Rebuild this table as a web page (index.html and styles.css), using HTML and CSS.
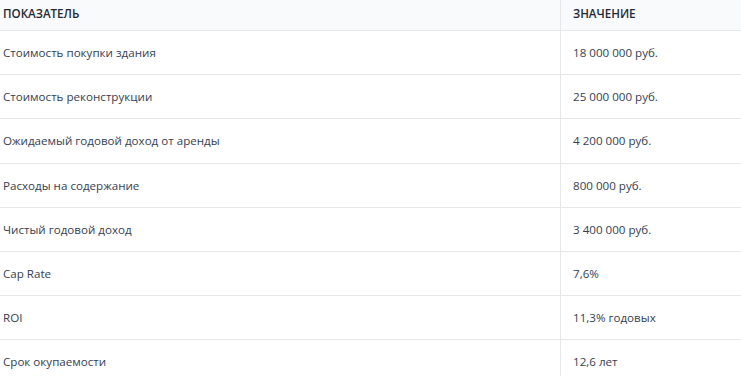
FILE: index.html
```html
<!DOCTYPE html>
<html lang="ru">
<head>
<meta charset="utf-8">
<link rel="stylesheet" href="styles.css">
</head>
<body>
<table class="tbl">
  <thead>
    <tr><th class="c1">Показатель</th><th class="c2">Значение</th></tr>
  </thead>
  <tbody>
    <tr><td class="c1">Стоимость покупки здания</td><td class="c2">18 000 000 руб.</td></tr>
    <tr><td class="c1">Стоимость реконструкции</td><td class="c2">25 000 000 руб.</td></tr>
    <tr><td class="c1">Ожидаемый годовой доход от аренды</td><td class="c2">4 200 000 руб.</td></tr>
    <tr><td class="c1">Расходы на содержание</td><td class="c2">800 000 руб.</td></tr>
    <tr><td class="c1">Чистый годовой доход</td><td class="c2">3 400 000 руб.</td></tr>
    <tr><td class="c1">Cap Rate</td><td class="c2">7,6%</td></tr>
    <tr><td class="c1">ROI</td><td class="c2">11,3% годовых</td></tr>
    <tr><td class="c1">Срок окупаемости</td><td class="c2">12,6 лет</td></tr>
  </tbody>
</table>
</body>
</html>
```
FILE: styles.css
```css
html, body {
  margin: 0;
  padding: 0;
  background: #ffffff;
}
body {
  font-family: "Open Sans", "Noto Sans", sans-serif;
  font-size: 11.6px;
  color: #374151;
}
.tbl {
  width: 741px;
  border-collapse: collapse;
  table-layout: fixed;
}
.tbl th {
  background: #f9fafb;
  color: #1f2937;
  font-weight: 600;
  font-size: 11.6px;
  text-transform: uppercase;
  text-align: left;
  height: 26px;
  padding: 0 12px 4px;
  border-bottom: 1px solid #e5e7eb;
}
.tbl td {
  height: 43.2px;
  padding: 0 12px;
  border-bottom: 1px solid #e5e7eb;
  vertical-align: middle;
}
.tbl .c1 {
  width: 545px;
  padding-left: 3px;
}
.tbl .c2 {
  border-left: 1px solid #e5e7eb;
}
```
